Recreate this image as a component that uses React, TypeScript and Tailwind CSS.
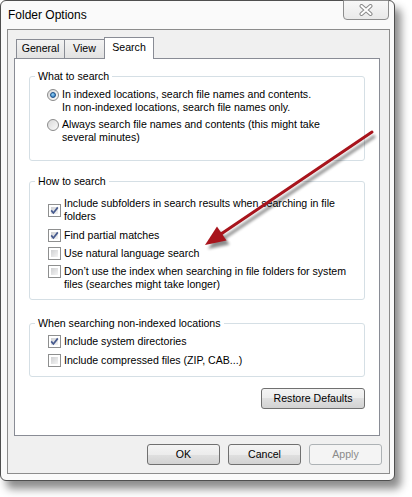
import React from "react";

type Row = { label: string[]; checked: boolean; gap: string; center?: boolean };

const howRows: Row[] = [
  {
    label: ["Include subfolders in search results when searching in file", "folders"],
    checked: true,
    gap: "",
    center: true,
  },
  { label: ["Find partial matches"], checked: true, gap: "mt-[6px]" },
  { label: ["Use natural language search"], checked: false, gap: "mt-[5px]" },
  {
    label: ["Don\u2019t use the index when searching in file folders for system", "files (searches might take longer)"],
    checked: false,
    gap: "mt-[5px]",
  },
];

const nonIndexedRows: Row[] = [
  { label: ["Include system directories"], checked: true, gap: "" },
  { label: ["Include compressed files (ZIP, CAB...)"], checked: false, gap: "mt-[6px]" },
];

function CheckBox({ checked }: { checked: boolean }) {
  return (
    <span className="relative block h-[13px] w-[13px] shrink-0 border border-[#8e8f8f] bg-white p-[2px]">
      <span className="block h-full w-full bg-linear-to-br from-[#cfd0d2] to-[#f4f4f4]" />
      {checked && (
        <svg className="absolute left-0 top-0" width="11" height="11" viewBox="0 0 11 11">
          <path d="M2.2 5.4 L4.4 8 L8.8 2.4" stroke="#475b8f" strokeWidth="1.7" fill="none" />
        </svg>
      )}
    </span>
  );
}

function Radio({ checked }: { checked: boolean }) {
  return (
    <span className="flex h-[12px] w-[12px] shrink-0 items-center justify-center rounded-full border border-[#8b8b8b] bg-linear-to-br from-[#d8d8d8] to-[#fbfbfb]">
      {checked && (
        <span className="h-[6px] w-[6px] rounded-full border border-[#174b86] bg-[radial-gradient(circle_at_40%_35%,#8fd0f5,#2a73bb)]" />
      )}
    </span>
  );
}

function CheckRow({ row }: { row: Row }) {
  return (
    <div className={`flex gap-[3px] pl-[18px] ${row.center ? "items-center" : "items-start"} ${row.gap}`}>
      <CheckBox checked={row.checked} />
      <div className="leading-[13px]">
        {row.label.map((l) => (
          <div key={l}>{l}</div>
        ))}
      </div>
    </div>
  );
}

function Group({ title, className, children }: { title: string; className: string; children: React.ReactNode }) {
  return (
    <fieldset className={`rounded-[3px] border border-[#d5dfe5] ${className}`}>
      <legend className="ml-[5px] px-[3px] leading-[13px]">{title}</legend>
      {children}
    </fieldset>
  );
}

function Button({ label, disabled, className }: { label: string; disabled?: boolean; className: string }) {
  return (
    <button
      className={
        disabled
          ? `h-[21px] rounded-[3px] border border-[#adb2b5] bg-[#f4f4f4] leading-none text-[#8a8a8a] ${className}`
          : `h-[21px] rounded-[3px] border border-[#707070] bg-[linear-gradient(#f4f4f4,#ececec_50%,#e0e0e0_50%,#d2d2d2)] leading-none text-black ${className}`
      }
    >
      {label}
    </button>
  );
}

export default function App() {
  return (
    <div className="relative h-[497px] w-[412px] overflow-hidden bg-white font-['Liberation_Sans',Arial,sans-serif] text-[10.6px] text-black">
      {/* Dialog window */}
      <div className="flex h-[481px] w-[395px] flex-col rounded-[6px] border border-[#4f4f4f] bg-[#fafafa] shadow-[6px_8px_9px_rgba(0,0,0,0.45)]">
        {/* Title bar */}
        <div className="flex h-[28px] items-center pl-[7px]">
          <span className="text-[12px] leading-none">Folder Options</span>
          <div className="-mt-px mr-[5px] ml-auto flex h-[20px] w-[46px] items-center justify-center self-start rounded-b-[4px] border border-[#8d8d8d] bg-linear-to-b from-[#f7f7f7] to-[#e9e9e9]">
            <svg width="14" height="12" viewBox="0 0 14 12">
              <path d="M2.5 2 L11.5 10 M11.5 2 L2.5 10" stroke="#8a8a8a" strokeWidth="4" strokeLinecap="round" />
              <path d="M2.5 2 L11.5 10 M11.5 2 L2.5 10" stroke="#ffffff" strokeWidth="2" strokeLinecap="round" />
            </svg>
          </div>
        </div>

        {/* Client area */}
        <div className="mr-[4px] ml-[6px] flex h-[445px] flex-col border border-[#8c8c8c] bg-[#f0f0f0]">
          {/* Tabs */}
          <div className="relative z-10 mt-[7px] ml-[8px] flex items-end">
            <div className="flex h-[19px] w-[49px] items-center justify-center border-x border-t border-[#898c95] bg-linear-to-b from-[#f3f3f3] to-[#e2e2e2]">
              General
            </div>
            <div className="-ml-px flex h-[19px] w-[41px] items-center justify-center border-x border-t border-[#898c95] bg-linear-to-b from-[#f3f3f3] to-[#e2e2e2]">
              View
            </div>
            <div className="-mb-px -ml-px flex h-[22px] w-[50px] items-center justify-center border-x border-t border-[#898c95] bg-white pb-[2px]">
              Search
            </div>
          </div>

          {/* Tab panel */}
          <div className="ml-[6px] flex h-[378px] w-[366px] flex-col border border-[#898c95] bg-white px-[14px] pt-[11px]">
            <Group title="What to search" className="pt-[5px] pb-[16px]">
              <div className="flex items-start gap-[3px] pl-[17px]">
                <span className="mt-px">
                  <Radio checked />
                </span>
                <div className="leading-[13px]">
                  <div>In indexed locations, search file names and contents.</div>
                  <div>In non-indexed locations, search file names only.</div>
                </div>
              </div>
              <div className="mt-[4px] flex items-start gap-[3px] pl-[17px]">
                <span className="mt-px">
                  <Radio checked={false} />
                </span>
                <div className="leading-[13px]">
                  <div>Always search file names and contents (this might take</div>
                  <div>several minutes)</div>
                </div>
              </div>
            </Group>

            <Group title="How to search" className="mt-[14px] pt-[9px] pb-[8px]">
              {howRows.map((r) => (
                <CheckRow key={r.label[0]} row={r} />
              ))}
            </Group>

            <Group title="When searching non-indexed locations" className="mt-[17px] pt-[5px] pb-[9px]">
              {nonIndexedRows.map((r) => (
                <CheckRow key={r.label[0]} row={r} />
              ))}
            </Group>

            <div className="mt-[11px] flex justify-end">
              <Button label="Restore Defaults" className="w-[104px]" />
            </div>
          </div>

          {/* Dialog buttons */}
          <div className="mt-[8px] flex justify-end gap-[8px] pr-[7px]">
            <Button label="OK" className="w-[73px]" />
            <Button label="Cancel" className="w-[73px]" />
            <Button label="Apply" disabled className="w-[73px]" />
          </div>
        </div>
      </div>

      {/* Red annotation arrow drawn over the dialog */}
      <svg className="pointer-events-none absolute top-0 left-0" width="412" height="497" viewBox="0 0 412 497">
        <defs>
          <filter id="arrowShadow" x="-20%" y="-20%" width="140%" height="140%">
            <feGaussianBlur stdDeviation="1.6" />
          </filter>
        </defs>
        <g transform="translate(3 4)" opacity="0.45" filter="url(#arrowShadow)">
          <path d="M372 132 L221 234" stroke="#000" strokeWidth="3" />
          <polygon points="205,245 226.5,240.5 217,226.5" fill="#000" />
        </g>
        <path d="M372 132 L221 234" stroke="#a8141c" strokeWidth="3" strokeLinecap="round" />
        <polygon points="205,245 226.5,240.5 217,226.5" fill="#a8141c" />
      </svg>
    </div>
  );
}
